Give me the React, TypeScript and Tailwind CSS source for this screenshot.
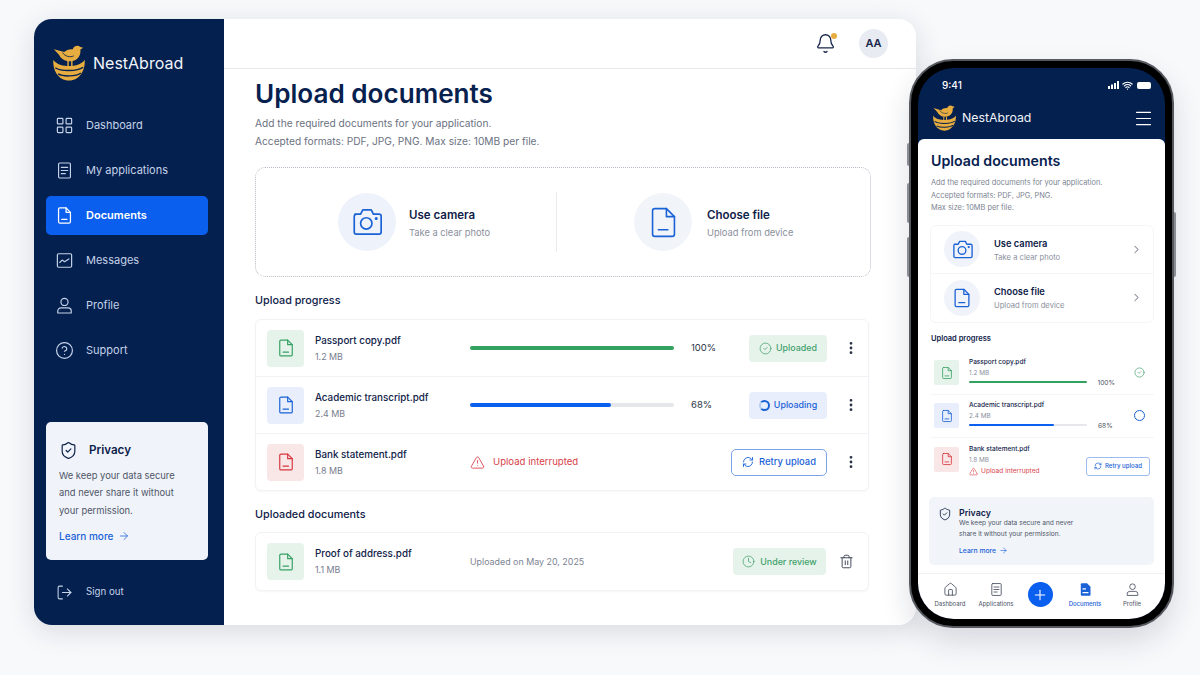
import {
  ArrowRight,
  Bell,
  ChevronRight,
  CircleCheck,
  CircleHelp,
  Clock,
  EllipsisVertical,
  House,
  LayoutGrid,
  LogOut,
  Menu,
  Plus,
  RefreshCw,
  ShieldCheck,
  Trash2,
  TriangleAlert,
  Wifi,
} from "lucide-react";

const font = { fontFamily: "Inter, 'Noto Sans', sans-serif" };

function Doc({ className = "", strokeWidth = 1.8 }: { className?: string; strokeWidth?: number }) {
  return (
    <svg viewBox="0 0 24 24" fill="none" stroke="currentColor" strokeWidth={strokeWidth} strokeLinejoin="round" strokeLinecap="round" className={className}>
      <path d="M6 2.500h8l5.500 5.500v12a1.500 1.500 0 0 1-1.500 1.500h-12a1.500 1.500 0 0 1-1.500-1.500v-16a1.500 1.500 0 0 1 1.500-1.500z" />
      <path d="M14 2.500v5.500h5.500" />
      <path d="M8.500 17h6.500" />
    </svg>
  );
}

function ListDoc({ className = "", strokeWidth = 1.5 }: { className?: string; strokeWidth?: number }) {
  return (
    <svg viewBox="0 0 24 24" fill="none" stroke="currentColor" strokeWidth={strokeWidth} strokeLinejoin="round" strokeLinecap="round" className={className}>
      <rect x="4.500" y="2.500" width="15" height="19" rx="1.500" />
      <path d="M8 8h8M8 12h8M8 16h5" />
    </svg>
  );
}

function FilledDoc({ className = "" }: { className?: string }) {
  return (
    <svg viewBox="0 0 24 24" className={className}>
      <path d="M6 2h8.500l5.500 5.500v13a1.500 1.500 0 0 1-1.500 1.500h-12.500a1.500 1.500 0 0 1-1.500-1.500v-17a1.500 1.500 0 0 1 1.500-1.500z" fill="currentColor" />
      <path d="M8 11h4M8 17h8" stroke="#fff" strokeWidth="2" strokeLinecap="round" />
    </svg>
  );
}

function Person({ className = "", strokeWidth = 1.5 }: { className?: string; strokeWidth?: number }) {
  return (
    <svg viewBox="0 0 24 24" fill="none" stroke="currentColor" strokeWidth={strokeWidth} strokeLinejoin="round" className={className}>
      <circle cx="12" cy="7.500" r="4.500" />
      <path d="M3.500 21.500v-2.500a4 4 0 0 1 4-4h9a4 4 0 0 1 4 4v2.500z" />
    </svg>
  );
}

function CameraIcon({ className = "", strokeWidth = 1.5 }: { className?: string; strokeWidth?: number }) {
  return (
    <svg viewBox="0 0 24 24" fill="none" stroke="currentColor" strokeWidth={strokeWidth} strokeLinejoin="round" className={className}>
      <path d="M3.500 6.500h4l1.500-3h6l1.500 3h4a1.500 1.500 0 0 1 1.500 1.500v11a1.500 1.500 0 0 1-1.500 1.500h-16a1.500 1.500 0 0 1-1.500-1.500v-11a1.500 1.500 0 0 1 1.500-1.500z" />
      <circle cx="11.500" cy="13" r="4" />
      <circle cx="18.500" cy="9.500" r="0.500" fill="currentColor" />
    </svg>
  );
}

function ChartBox({ className = "" }: { className?: string }) {
  return (
    <svg viewBox="0 0 24 24" fill="none" stroke="currentColor" strokeWidth={1.5} strokeLinejoin="round" strokeLinecap="round" className={className}>
      <rect x="3" y="3.500" width="18" height="17" rx="1.500" />
      <path d="M6 14.500l3-3 3 2 5.500-3.500" />
    </svg>
  );
}

function Logo({ className = "" }: { className?: string }) {
  return (
    <svg viewBox="12 9 34 38" className={className}>
      <path d="M13 13.500l11 3c2-2.500 6-3.500 9-3 .8-3.500 5-5 8-2.500l3 .8-3 1.900c.8 7-3.500 12.500-10.500 12.500-6.500 0-10.500-3.500-12-7z" fill="#e8ad40" />
      <path d="M22 17c3 4 8 5.500 12 3.500" fill="none" stroke="#04204f" strokeWidth="0.900" />
      <path d="M28 26v6M32 26v6" stroke="#e8ad40" strokeWidth="1.500" />
      <path d="M12.500 24.500c1 1.500 3 4 8 5.500 5 1.400 12 1.400 17 0 4-1.200 6.500-3 8-5.500 1.200 10-5 22-16.500 22S11.500 35 12.500 24.500z" fill="#e8ad40" />
      <path d="M14.500 33c6 4 23 4 29.500 -.5M17.500 39.500c5 3 19 3 24 -1" fill="none" stroke="#04204f" strokeWidth="1.500" />
    </svg>
  );
}

const navItems = [
  { label: "Dashboard", icon: <LayoutGrid className="w-[19px] h-[19px]" strokeWidth={1.5} /> },
  { label: "My applications", icon: <ListDoc className="w-[19px] h-[19px]" /> },
  { label: "Documents", icon: <Doc className="w-[19px] h-[19px]" strokeWidth={1.6} />, active: true },
  { label: "Messages", icon: <ChartBox className="w-[19px] h-[19px]" /> },
  { label: "Profile", icon: <Person className="w-[19px] h-[19px]" /> },
  { label: "Support", icon: <CircleHelp className="w-[19px] h-[19px]" strokeWidth={1.5} /> },
];

function Sidebar() {
  return (
    <aside className="w-[190px] shrink-0 bg-[#04204f] flex flex-col">
      <div className="flex items-center gap-[7px] h-[87px] pl-[18px]">
        <Logo className="w-[34px] h-[36px]" />
        <span className="text-[16px] text-[#f1f4fa]">NestAbroad</span>
      </div>
      <nav className="flex flex-col gap-[6px] pl-[12px] pr-[16px]">
        {navItems.map((item) => (
          <div
            key={item.label}
            className={
              item.active
                ? "flex items-center gap-[12px] h-[39px] pl-[9px] rounded-[5px] bg-[#0b5fee] text-white text-[11px] font-semibold"
                : "flex items-center gap-[12px] h-[39px] pl-[9px] rounded-[5px] text-[#c5d2e8] text-[11px]"
            }
          >
            {item.icon}
            {item.label}
          </div>
        ))}
      </nav>
      <div className="mt-auto ml-[12px] mr-[16px] h-[138px] rounded-[5px] bg-[#f0f3f9] px-[13px] pt-[19px]">
        <div className="flex items-center gap-[11px]">
          <ShieldCheck className="w-[19px] h-[19px] text-[#0b2149]" strokeWidth={1.5} />
          <span className="text-[11.600px] font-semibold text-[#0b2149]">Privacy</span>
        </div>
        <p className="mt-[7px] text-[9.400px] leading-[17.300px] text-[#4e5668]">
          We keep your data secure
          <br />
          and never share it without
          <br />
          your permission.
        </p>
        <div className="mt-[10px] flex items-center gap-[5px] text-[10px] font-medium text-[#1a62d6]">
          Learn more <ArrowRight className="w-[12px] h-[12px]" strokeWidth={1.5} />
        </div>
      </div>
      <div className="h-[65px] flex items-center gap-[13px] pl-[22px] text-[#c5d2e8] text-[9.700px]">
        <LogOut className="w-[17px] h-[17px]" strokeWidth={1.5} />
        Sign out
      </div>
    </aside>
  );
}

function FileTile({ tone, small }: { tone: "green" | "blue" | "red"; small?: boolean }) {
  const tones = {
    green: "bg-[#e6f3ea] text-[#36a165]",
    blue: "bg-[#e8eefb] text-[#1a62d6]",
    red: "bg-[#f9e6e7] text-[#d8363f]",
  };
  return (
    <div className={`${small ? "w-[25px] h-[25px] rounded-[2px]" : "w-[37px] h-[37px] rounded-[4px]"} ${tones[tone]} shrink-0 flex items-center justify-center`}>
      <Doc className={small ? "w-[14px] h-[14px]" : "w-[20px] h-[20px]"} strokeWidth={1.4} />
    </div>
  );
}

function FileName({ name, size }: { name: string; size: string }) {
  return (
    <div className="w-[155px] shrink-0">
      <div className="text-[9.800px] leading-[17px] font-medium text-[#0f2148]">{name}</div>
      <div className="text-[8.900px] leading-[16px] text-[#767d8d]">{size}</div>
    </div>
  );
}

function Dots() {
  return <EllipsisVertical className="w-[16px] h-[16px] text-[#2a3346] ml-[16px]" strokeWidth={2.2} />;
}

function MainPanel() {
  return (
    <main className="flex-1 min-w-0 bg-white">
      <header className="h-[50px] border-b border-[#e6e8ec] flex items-center justify-end gap-[23px] pr-[28px]">
        <div className="relative">
          <Bell className="w-[21px] h-[21px] text-[#17264a]" strokeWidth={1.5} />
          <span className="absolute top-0 right-[-1px] w-[6px] h-[6px] rounded-full bg-[#e8ad40]" />
        </div>
        <div className="w-[29px] h-[29px] rounded-full bg-[#e8ebf1] flex items-center justify-center text-[11px] font-semibold text-[#17264a]">AA</div>
      </header>
      <div className="pl-[31px] pr-[45px] pt-[7px]">
        <h1 className="text-[26.100px] leading-[36px] font-semibold text-[#07214f]">Upload documents</h1>
        <p className="mt-[2px] text-[10.200px] leading-[18px] text-[#6b7282]">
          Add the required documents for your application.
          <br />
          Accepted formats: PDF, JPG, PNG. Max size: 10MB per file.
        </p>
        <div className="mt-[17px] h-[110px] border border-dotted border-[#b5bac4] rounded-[10px] flex items-center">
          <div className="w-[301px] h-[60px] border-r border-[#e9ebef] flex items-center pl-[82px] gap-[13px]">
            <div className="w-[58px] h-[58px] rounded-full bg-[#eef2fa] flex items-center justify-center">
              <CameraIcon className="w-[34px] h-[34px] text-[#1a62d6]" strokeWidth={1.2} />
            </div>
            <div className="pt-[3px]">
              <div className="text-[11.500px] leading-[18px] font-semibold text-[#0f2148]">Use camera</div>
              <div className="mt-[1px] text-[9.300px] leading-[16px] text-[#8a909d]">Take a clear photo</div>
            </div>
          </div>
          <div className="flex items-center pl-[77px] gap-[15px]">
            <div className="w-[58px] h-[58px] rounded-full bg-[#f1f4f9] flex items-center justify-center">
              <Doc className="w-[35px] h-[35px] text-[#1a62d6]" strokeWidth={1.1} />
            </div>
            <div className="pt-[3px]">
              <div className="text-[11.500px] leading-[18px] font-semibold text-[#0f2148]">Choose file</div>
              <div className="mt-[1px] text-[9.300px] leading-[16px] text-[#8a909d]">Upload from device</div>
            </div>
          </div>
        </div>

        <h2 className="mt-[16px] text-[10.800px] leading-[16px] font-medium text-[#0f2148]">Upload progress</h2>
        <div className="mt-[10px] mr-[2px] h-[172px] rounded-[6px] border border-[#f1f2f5] shadow-[0_1px_2px_rgba(20,30,60,0.04)] flex flex-col divide-y divide-[#f1f2f5]">
          <div className="flex-1 flex items-center pl-[11px] pr-[9px]">
            <FileTile tone="green" />
            <div className="w-[11px]" />
            <FileName name="Passport copy.pdf" size="1.2 MB" />
            <div className="w-[204px] h-[4px] rounded-full bg-[#33a160]" />
            <span className="ml-[17px] text-[9.500px] text-[#2a3346]">100%</span>
            <div className="ml-auto w-[78px] h-[27px] rounded-[4px] bg-[#e6f3ea] flex items-center justify-center gap-[4px] text-[#41a06d] text-[8.900px] font-medium">
              <CircleCheck className="w-[13px] h-[13px]" strokeWidth={1.4} /> Uploaded
            </div>
            <Dots />
          </div>
          <div className="flex-1 flex items-center pl-[11px] pr-[9px]">
            <FileTile tone="blue" />
            <div className="w-[11px]" />
            <FileName name="Academic transcript.pdf" size="2.4 MB" />
            <div className="w-[204px] h-[4px] rounded-full bg-[#e5e7eb]">
              <div className="w-[69%] h-full rounded-full bg-[#0b5fee]" />
            </div>
            <span className="ml-[17px] text-[9.500px] text-[#2a3346]">68%</span>
            <div className="ml-auto w-[78px] h-[27px] rounded-[4px] bg-[#e8eefb] flex items-center justify-center gap-[4px] text-[#1a62d6] text-[8.900px] font-medium">
              <span className="w-[11px] h-[11px] rounded-full border-2 border-[#1a62d6] border-l-[#b8cdf2]" /> Uploading
            </div>
            <Dots />
          </div>
          <div className="flex-1 flex items-center pl-[11px] pr-[9px]">
            <FileTile tone="red" />
            <div className="w-[11px]" />
            <FileName name="Bank statement.pdf" size="1.8 MB" />
            <div className="flex items-center gap-[8px] text-[9.600px] text-[#d8404a]">
              <TriangleAlert className="w-[15px] h-[15px]" strokeWidth={1.4} /> Upload interrupted
            </div>
            <div className="ml-auto w-[96px] h-[27px] rounded-[5px] border border-[#7ba3e6] flex items-center justify-center gap-[5px] text-[#1a62d6] text-[9.400px] font-medium">
              <RefreshCw className="w-[12px] h-[12px]" strokeWidth={1.8} /> Retry upload
            </div>
            <Dots />
          </div>
        </div>

        <h2 className="mt-[16px] text-[10.800px] leading-[16px] font-medium text-[#0f2148]">Uploaded documents</h2>
        <div className="mt-[9px] mr-[2px] h-[59px] rounded-[6px] border border-[#f1f2f5] shadow-[0_1px_2px_rgba(20,30,60,0.04)] flex items-center pl-[11px] pr-[14px]">
          <FileTile tone="green" />
          <div className="w-[11px]" />
          <FileName name="Proof of address.pdf" size="1.1 MB" />
          <span className="text-[8.900px] text-[#7d8492]">Uploaded on May 20, 2025</span>
          <div className="ml-auto w-[93px] h-[27px] rounded-[4px] bg-[#e6f3ea] flex items-center justify-center gap-[5px] text-[#41a06d] text-[8.900px] font-medium">
            <Clock className="w-[13px] h-[13px]" strokeWidth={1.4} /> Under review
          </div>
          <Trash2 className="w-[15px] h-[15px] ml-[13px] text-[#3a4252]" strokeWidth={1.5} />
        </div>
      </div>
    </main>
  );
}

function PhoneOption({ icon, title, sub }: { icon: React.ReactNode; title: string; sub: string }) {
  return (
    <div className="h-[48px] flex items-center pl-[13px] pr-[10px]">
      <div className="w-[36px] h-[36px] rounded-full bg-[#f0f3f9] flex items-center justify-center text-[#1a62d6]">{icon}</div>
      <div className="ml-[14px] pt-[2px]">
        <div className="text-[9.300px] leading-[14px] font-semibold text-[#0f2148]">{title}</div>
        <div className="mt-[1px] text-[7.600px] leading-[12px] text-[#8a909d]">{sub}</div>
      </div>
      <ChevronRight className="ml-auto w-[13px] h-[13px] text-[#4a5263]" strokeWidth={1.6} />
    </div>
  );
}

function PhoneFile({
  tone,
  name,
  size,
  pct,
  bar,
  barWidth,
  status,
}: {
  tone: "green" | "blue";
  name: string;
  size: string;
  pct: string;
  bar: string;
  barWidth: string;
  status: React.ReactNode;
}) {
  return (
    <div className="h-[43px] flex items-center pl-[3px] pr-[9px]">
      <FileTile tone={tone} small />
      <div className="ml-[10px] w-[146px]">
        <div className="text-[6.500px] leading-[11px] font-medium text-[#0f2148]">{name}</div>
        <div className="text-[6.400px] leading-[10px] text-[#8a909d]">{size}</div>
        <div className="flex items-center -mt-[2px]">
          <div className="w-[118px] h-[2px] rounded-full bg-[#e5e7eb]">
            <div className={`${barWidth} h-full rounded-full ${bar}`} />
          </div>
          <span className="ml-[11px] mt-[2px] text-[6.600px] leading-[10px] text-[#4a5263]">{pct}</span>
        </div>
      </div>
      <div className="ml-auto">{status}</div>
    </div>
  );
}

function Phone() {
  return (
    <div className="absolute left-[909px] top-[59px] w-[265px] h-[569px] rounded-[44px] bg-black border-2 border-[#55585e] p-[7px] shadow-[0_14px_30px_rgba(20,30,60,0.14)]">
      <span className="absolute -left-[4px] top-[82px] w-[2px] h-[23px] rounded-l bg-[#8b8e94]" />
      <span className="absolute -left-[4px] top-[122px] w-[2px] h-[40px] rounded-l bg-[#8b8e94]" />
      <span className="absolute -left-[4px] top-[176px] w-[2px] h-[40px] rounded-l bg-[#8b8e94]" />
      <span className="absolute -right-[4px] top-[151px] w-[2px] h-[65px] rounded-r bg-[#8b8e94]" />
      <div className="w-full h-full rounded-[36px] overflow-hidden bg-[#04204f] flex flex-col">
        <div className="h-[71px] shrink-0 text-white">
          <div className="h-[32px] flex items-center justify-between pl-[24px] pr-[14px] pt-[2px]">
            <span className="text-[10px] font-medium">9:41</span>
            <div className="flex items-center gap-[3px]">
              <svg viewBox="0 0 11 8" className="w-[11px] h-[8px]" fill="currentColor">
                <rect x="0" y="5" width="2" height="3" />
                <rect x="3" y="3.500" width="2" height="4.500" />
                <rect x="6" y="2" width="2" height="6" />
                <rect x="9" y="0" width="2" height="8" />
              </svg>
              <Wifi className="w-[11px] h-[11px]" strokeWidth={2.5} />
              <span className="ml-[1px] w-[14px] h-[7px] rounded-[2px] bg-white" />
            </div>
          </div>
          <div className="h-[36px] flex items-center pl-[14px] pr-[11px]">
            <Logo className="w-[25px] h-[26px]" />
            <span className="ml-[5px] text-[12.300px] text-[#f1f4fa]">NestAbroad</span>
            <Menu className="ml-auto w-[21px] h-[21px]" strokeWidth={1.2} />
          </div>
        </div>
        <div className="flex-1 rounded-t-[6px] bg-white pl-[13px] pr-[11px]">
          <h2 className="mt-[12px] text-[14.200px] leading-[20px] font-semibold text-[#07214f]">Upload documents</h2>
          <p className="mt-[6px] text-[7.400px] leading-[12.500px] text-[#7d8492]">
            Add the required documents for your application.
            <br />
            Accepted formats: PDF, JPG, PNG.
            <br />
            Max size: 10MB per file.
          </p>
          <div className="mt-[10px] -ml-[1px] rounded-[6px] border border-[#f4f5f7] divide-y divide-[#f4f5f7]">
            <PhoneOption icon={<CameraIcon className="w-[23px] h-[23px]" strokeWidth={1.4} />} title="Use camera" sub="Take a clear photo" />
            <PhoneOption icon={<Doc className="w-[22px] h-[22px]" strokeWidth={1.4} />} title="Choose file" sub="Upload from device" />
          </div>
          <div className="mt-[10px] text-[7.500px] leading-[12px] font-semibold text-[#0f2148]">Upload progress</div>
          <div className="mt-[7px] divide-y divide-[#f5f6f8]">
            <PhoneFile
              tone="green"
              name="Passport copy.pdf"
              size="1.2 MB"
              pct="100%"
              bar="bg-[#33a160]"
              barWidth="w-full"
              status={<CircleCheck className="w-[11px] h-[11px] text-[#41a06d]" strokeWidth={1.5} />}
            />
            <PhoneFile
              tone="blue"
              name="Academic transcript.pdf"
              size="2.4 MB"
              pct="68%"
              bar="bg-[#0b5fee]"
              barWidth="w-[72%]"
              status={<span className="block w-[11px] h-[11px] rounded-full border-[1.5px] border-[#1a62d6]" />}
            />
            <div className="h-[43px] flex items-center pl-[3px] pr-[4px]">
              <FileTile tone="red" small />
              <div className="ml-[10px] pt-[2px]">
                <div className="text-[6.500px] leading-[11px] font-medium text-[#0f2148]">Bank statement.pdf</div>
                <div className="text-[6.400px] leading-[10px] text-[#8a909d]">1.8 MB</div>
                <div className="mt-[1px] flex items-center gap-[3px] text-[6.600px] leading-[11px] text-[#d8404a]">
                  <TriangleAlert className="w-[9px] h-[9px]" strokeWidth={1.6} /> Upload interrupted
                </div>
              </div>
              <div className="ml-auto mt-[14px] w-[64px] h-[19px] rounded-[3px] border border-[#9dbcef] flex items-center justify-center gap-[3px] text-[#1a62d6] text-[6.100px] font-medium">
                <RefreshCw className="w-[8px] h-[8px]" strokeWidth={2} /> Retry upload
              </div>
            </div>
          </div>
          <div className="mt-[16px] -ml-[2px] h-[68px] rounded-[5px] bg-[#f1f4f9] flex pl-[9px] pt-[10px]">
            <ShieldCheck className="w-[14px] h-[14px] text-[#17264a]" strokeWidth={1.5} />
            <div className="ml-[7px]">
              <div className="text-[8.800px] leading-[11px] font-semibold text-[#0f2148]">Privacy</div>
              <div className="text-[6.600px] leading-[11.500px] text-[#4e5668]">
                We keep your data secure and never
                <br />
                share it without your permission.
              </div>
              <div className="mt-[4px] flex items-center gap-[3px] text-[6.800px] leading-[11px] font-medium text-[#1a62d6]">
                Learn more <ArrowRight className="w-[9px] h-[9px]" strokeWidth={1.6} />
              </div>
            </div>
          </div>
        </div>
        <div className="h-[46px] shrink-0 bg-white flex items-start border-t border-[#f0f1f4] pt-[8px] pl-[10px] text-[6px] text-[#4a5263]">
          <div className="w-[44px] flex flex-col items-center gap-[2px]">
            <House className="w-[15px] h-[15px]" strokeWidth={1.4} />
            Dashboard
          </div>
          <div className="w-[48px] flex flex-col items-center gap-[2px]">
            <ListDoc className="w-[15px] h-[15px]" strokeWidth={1.4} />
            Applications
          </div>
          <div className="w-[40px] flex justify-center">
            <div className="w-[25px] h-[25px] rounded-full bg-[#0b5fee] flex items-center justify-center text-white">
              <Plus className="w-[16px] h-[16px]" strokeWidth={1.6} />
            </div>
          </div>
          <div className="w-[50px] flex flex-col items-center gap-[2px] text-[#1a62d6] font-medium">
            <FilledDoc className="w-[15px] h-[15px]" />
            Documents
          </div>
          <div className="w-[44px] flex flex-col items-center gap-[2px]">
            <Person className="w-[15px] h-[15px]" strokeWidth={1.4} />
            Profile
          </div>
        </div>
      </div>
    </div>
  );
}

export default function App() {
  return (
    <div style={font} className="relative w-[1200px] h-[675px] overflow-hidden bg-[#f8f9fb] pl-[34px] pt-[19px]">
      <div className="w-[882px] h-[606px] flex rounded-[18px] overflow-hidden bg-white shadow-[0_6px_28px_rgba(20,30,60,0.14)]">
        <Sidebar />
        <MainPanel />
      </div>
      <Phone />
    </div>
  );
}
